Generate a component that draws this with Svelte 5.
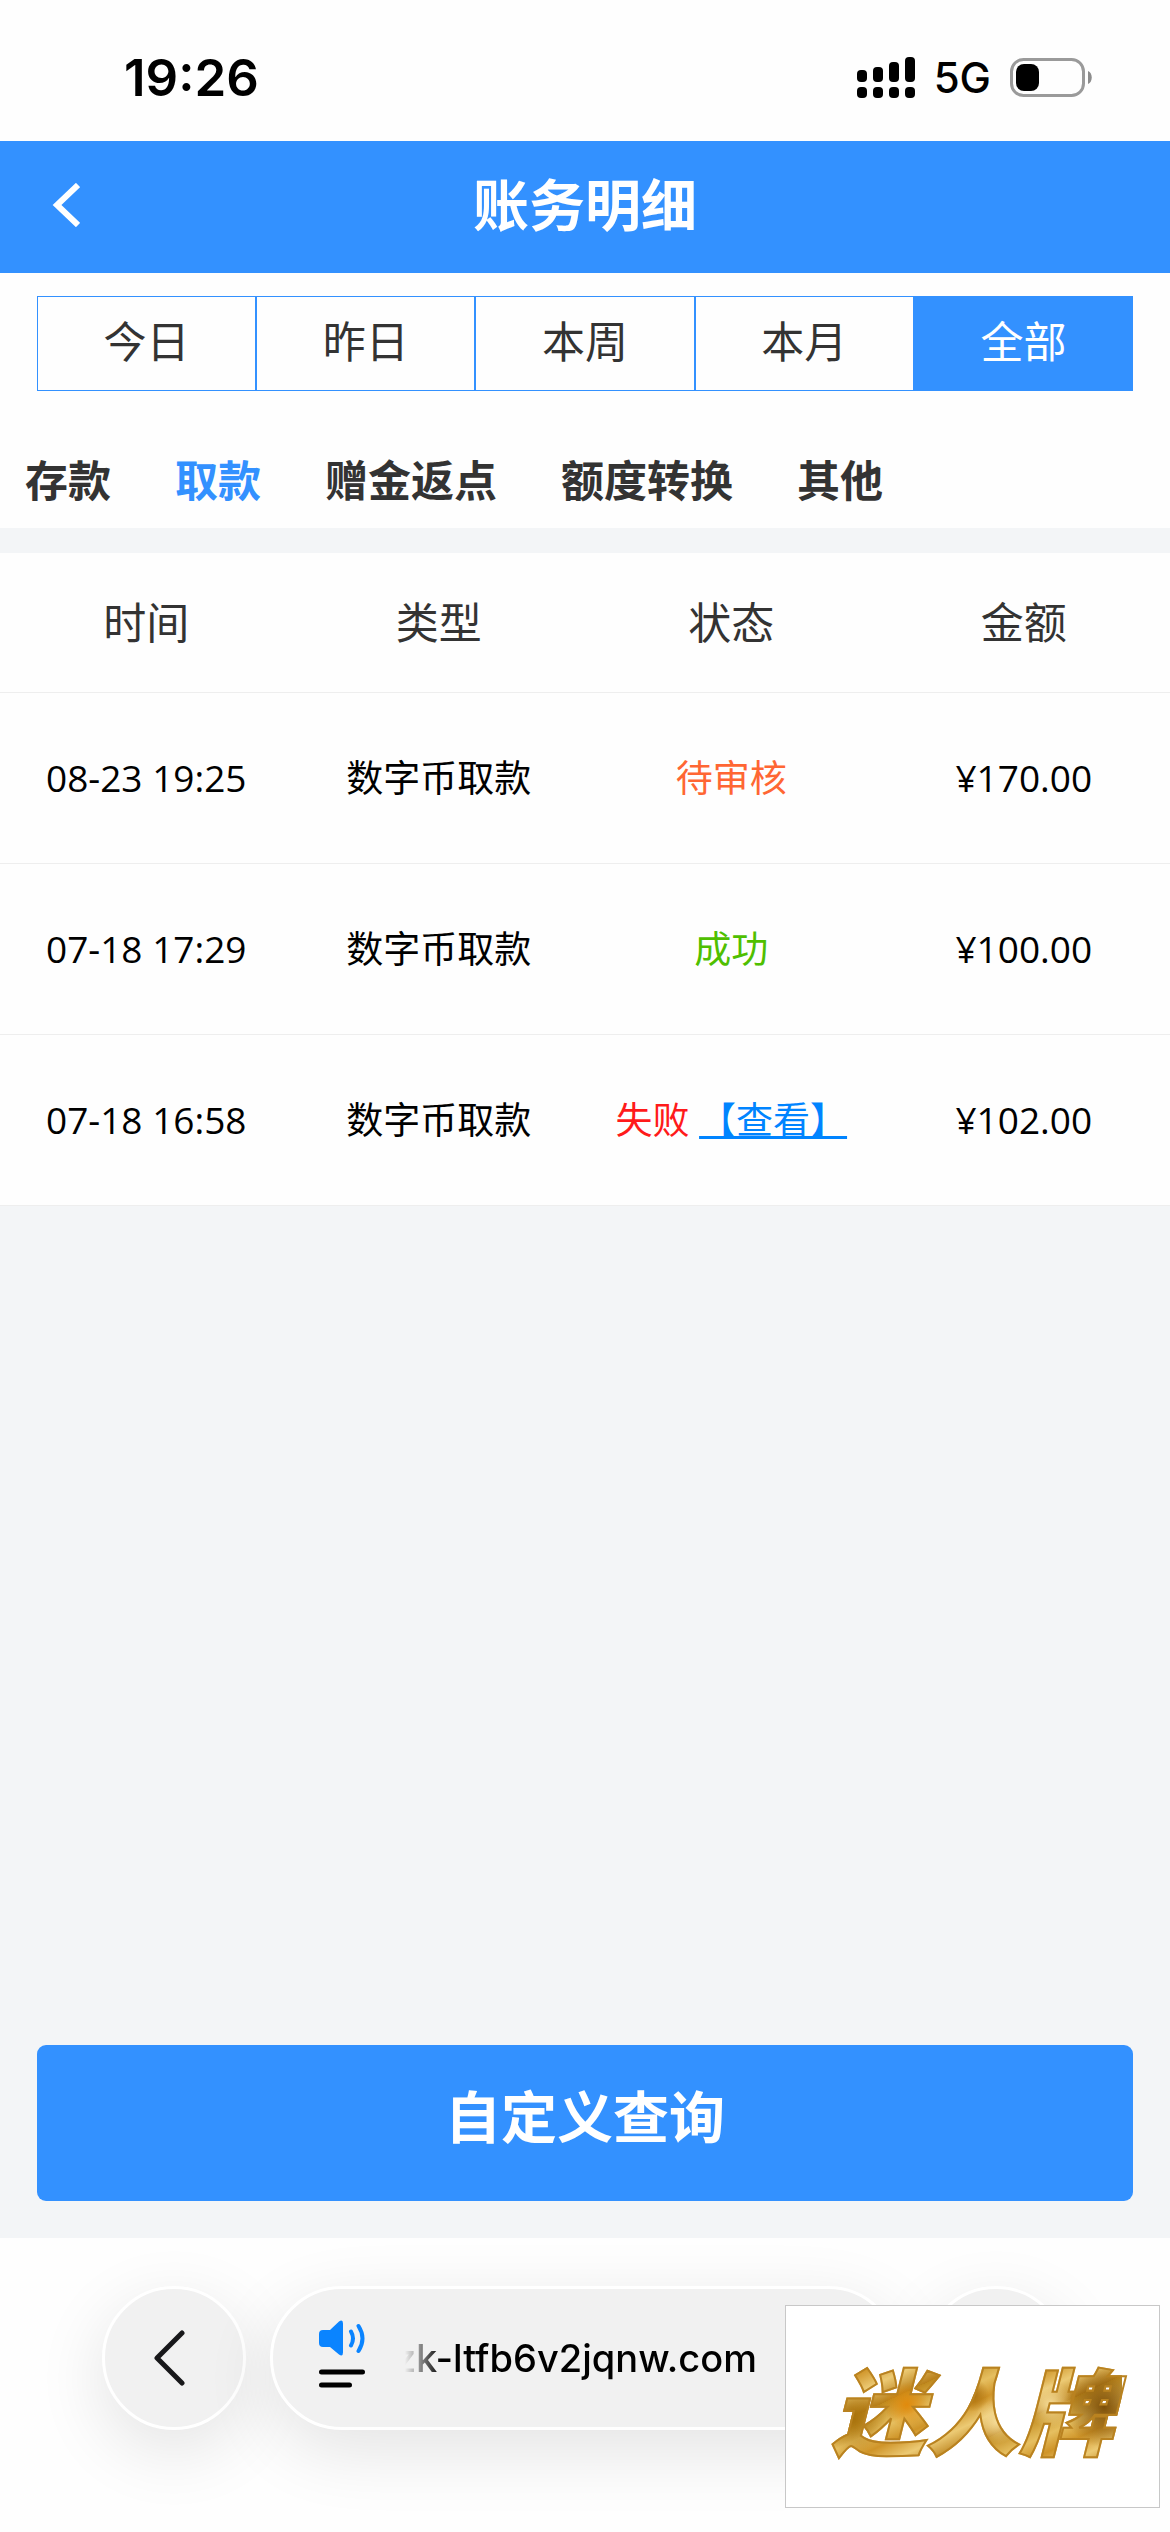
<script lang="ts">
  type Status = "pending" | "success" | "failed";

  interface BillRecord {
    time: string;
    type: string;
    status: Status;
    amount: string;
  }

  const periods = ["今日", "昨日", "本周", "本月", "全部"];
  const categories = ["存款", "取款", "赠金返点", "额度转换", "其他"];
  const statusText: Record<Status, string> = { pending: "待审核", success: "成功", failed: "失败" };

  const records: BillRecord[] = [
    { time: "08-23 19:25", type: "数字币取款", status: "pending", amount: "¥170.00" },
    { time: "07-18 17:29", type: "数字币取款", status: "success", amount: "¥100.00" },
    { time: "07-18 16:58", type: "数字币取款", status: "failed", amount: "¥102.00" },
  ];

  let period = $state("全部");
  let category = $state("取款");
</script>

<div class="screen">
  <div class="status-bar">
    <span class="clock">19:26</span>
    <div class="indicators">
      <svg class="signal" viewBox="0 0 58 42" aria-hidden="true">
        <rect x="0" y="13" width="10" height="12" rx="4" />
        <rect x="16" y="10" width="10" height="15" rx="4" />
        <rect x="32" y="5" width="10" height="20" rx="4" />
        <rect x="48" y="0" width="10" height="25" rx="4" />
        <rect x="0" y="30" width="10" height="11" rx="4" />
        <rect x="16" y="30" width="10" height="11" rx="4" />
        <rect x="32" y="30" width="10" height="11" rx="4" />
        <rect x="48" y="30" width="10" height="11" rx="4" />
      </svg>
      <span class="network">5G</span>
      <svg class="battery" viewBox="0 0 82 40" aria-hidden="true">
        <rect x="1.5" y="1.5" width="72" height="36" rx="12" fill="none" stroke="#9a9a9a" stroke-width="3" />
        <rect x="6" y="6" width="23" height="27" rx="8" />
        <path d="M78 13c5 2 5 11 0 13z" fill="#8c8c8c" />
      </svg>
    </div>
  </div>

  <header class="nav">
    <button type="button" class="nav-back" aria-label="返回">
      <svg viewBox="0 0 28 44" aria-hidden="true">
        <path d="M26 2 5 22l21 20" fill="none" stroke="#fff" stroke-width="6" />
      </svg>
    </button>
    <h1>账务明细</h1>
  </header>

  <div class="filters">
    <div class="periods">
      {#each periods as p}
        <button type="button" class="period" class:active={period === p} onclick={() => (period = p)}>{p}</button>
      {/each}
    </div>
    <div class="categories">
      {#each categories as c}
        <button type="button" class="category" class:active={category === c} onclick={() => (category = c)}>{c}</button>
      {/each}
    </div>
  </div>

  <main>
    <table>
      <thead>
        <tr><th>时间</th><th>类型</th><th>状态</th><th>金额</th></tr>
      </thead>
      <tbody>
        {#each records as r}
          <tr>
            <td>{r.time}</td>
            <td>{r.type}</td>
            <td>
              <span class={r.status}>{statusText[r.status]}</span>
              {#if r.status === "failed"}<a href="#detail">【查看】</a>{/if}
            </td>
            <td>{r.amount}</td>
          </tr>
        {/each}
      </tbody>
    </table>
    <button type="button" class="custom-query">自定义查询</button>
  </main>

  <footer class="browser-bar">
    <button type="button" class="round" aria-label="后退">
      <svg class="back-icon" viewBox="0 0 32 56" aria-hidden="true">
        <path d="M29 3 4 28l25 25" fill="none" stroke="#18181a" stroke-width="5" stroke-linecap="round" stroke-linejoin="round" />
      </svg>
    </button>
    <div class="address-pill">
      <button type="button" class="page-menu" aria-label="页面菜单">
        <svg viewBox="0 0 46 68" aria-hidden="true">
          <path d="M4 10h7L20 1.500q4-2.500 4 2v29q0 4.500-4 2L11 27H4q-4 0-4-4v-9q0-4 4-4z" fill="#0a84ff" />
          <path d="M32 11.500q4 7 0 14M39.500 6q8 12.500 0 25" fill="none" stroke="#0a84ff" stroke-width="4" stroke-linecap="round" />
          <path d="M2.500 52h41M2.500 65h28" stroke="#000" stroke-width="5" stroke-linecap="round" />
        </svg>
      </button>
      <button type="button" class="address"><span>zk-ltfb6v2jqnw.com</span></button>
    </div>
    <button type="button" class="round" aria-label="更多"></button>
    <div class="stamp"><span>迷人牌</span></div>
  </footer>
</div>

<style>
  :global(body) { margin: 0; background: #fff; }

  .screen {
    display: flex; flex-direction: column; min-height: 100vh;
    font-family: "Open Sans", "Noto Sans CJK SC", sans-serif; color: #333; background: #fefefe;
  }
  button {
    padding: 0; border: none; background: none; color: inherit; font: inherit; cursor: pointer;
  }
  svg { display: block; }

  .status-bar {
    display: flex; align-items: center; justify-content: space-between;
    height: 141px; padding: 14px 78px 0 124px; box-sizing: border-box;
    font-family: Inter, sans-serif; color: #000;
  }
  .clock { font-size: 51px; font-weight: 600; }
  .indicators { display: flex; align-items: center; gap: 19px; }
  .network { font-size: 42px; font-weight: 500; }
  .signal { width: 58px; height: 42px; }
  .battery { width: 82px; height: 40px; }

  .nav {
    display: grid; grid-template-columns: 132px 1fr 132px; align-items: center;
    height: 132px; background: #3391ff; color: #fff;
  }
  .nav-back { display: flex; align-items: center; justify-content: center; height: 100%; }
  .nav-back svg { width: 28px; height: 44px; margin-bottom: 4px; }
  h1 { margin: 0; font-size: 56px; line-height: 80px; font-weight: 700; text-align: center; padding-bottom: 6px; }

  .filters { padding-top: 23px; }
  .periods { display: flex; margin: 0 37px; border: 1px solid #3391ff; }
  .period { flex: 1; height: 93px; padding-bottom: 4px; font-size: 43px; line-height: 60px; }
  .period + .period { border-left: 2px solid #3391ff; }
  .period.active { background: #3391ff; color: #fff; }
  .categories { display: flex; gap: 64px; padding: 59px 25px 16px; }
  .category { height: 62px; font-size: 43px; line-height: 62px; font-weight: 700; white-space: nowrap; }
  .category.active { color: #3391ff; }

  main {
    flex: 1; display: flex; flex-direction: column; justify-content: space-between;
    padding: 25px 0 37px; background: #f3f5f7;
  }
  table { width: 100%; table-layout: fixed; border-collapse: collapse; background: #fefefe; }
  th, td { padding: 0; text-align: center; border-bottom: 1px solid #eee; }
  th { height: 139px; font-size: 43px; line-height: 60px; font-weight: 400; }
  td { height: 170px; font-size: 37px; line-height: 52px; color: #000; white-space: nowrap; }
  .pending { color: #ff6633; }
  .success { color: #4fbf00; }
  .failed { color: #ff1a1a; }
  a { color: #0084ff; text-decoration: underline; text-decoration-thickness: 3px; text-decoration-skip-ink: none; }

  .custom-query {
    height: 156px; margin: 0 37px; padding-bottom: 14px; border-radius: 9px;
    background: #3391ff; color: #fff; font-size: 56px; line-height: 80px; font-weight: 700;
  }

  .browser-bar {
    position: relative; display: flex; gap: 24px; height: 294px; padding: 48px 102px 0;
    box-sizing: border-box; font-family: Inter, sans-serif; color: #000;
  }
  .round, .address-pill {
    height: 144px; box-sizing: border-box; border: 3px solid #fff; border-radius: 72px;
    background: #f1f1f1; box-shadow: 0 20px 70px rgba(0, 0, 0, 0.11);
  }
  .round { display: flex; align-items: center; justify-content: center; flex: none; width: 144px; }
  .back-icon { width: 32px; height: 56px; margin-right: 10px; }
  .address-pill { flex: 1; display: flex; align-items: center; gap: 24px; padding: 0 140px 0 46px; min-width: 0; }
  .page-menu { flex: none; padding-bottom: 8px; }
  .page-menu svg { width: 46px; height: 68px; }
  .address {
    flex: 1; display: flex; justify-content: flex-end; min-width: 0; overflow: hidden;
    font-size: 38px; line-height: 52px; font-weight: 500; white-space: nowrap;
    mask-image: linear-gradient(90deg, transparent 16px, #000 52px);
  }

  .stamp {
    position: absolute; right: 10px; bottom: 24px; width: 375px; height: 203px; box-sizing: border-box;
    display: flex; align-items: center; justify-content: center;
    border: 1px solid #c8c8c8; background: #fff;
  }
  .stamp span {
    padding: 0 8px; font-family: "Noto Sans CJK SC", sans-serif;
    font-size: 94px; line-height: 120px; font-weight: 900; font-style: italic;
    color: transparent; background-clip: text; -webkit-text-stroke: 2px #b98220;
    background-image:
      radial-gradient(circle at 28% 48%, #e08a0c 0, transparent 10%),
      radial-gradient(circle at 10% 60%, #a8720c 0, transparent 12%),
      radial-gradient(circle at 58% 62%, #f5dc98 0, transparent 12%),
      radial-gradient(circle at 50% 40%, #a86c0a 0, transparent 10%),
      radial-gradient(circle at 76% 48%, #f5dc98 0, transparent 10%),
      radial-gradient(circle at 94% 50%, #7d4f08 0, transparent 14%),
      repeating-linear-gradient(155deg, #c08a1e 0, #e6bf60 22px, #cf9428 38px, #ecca74 56px, #b9801a 76px);
  }
</style>
